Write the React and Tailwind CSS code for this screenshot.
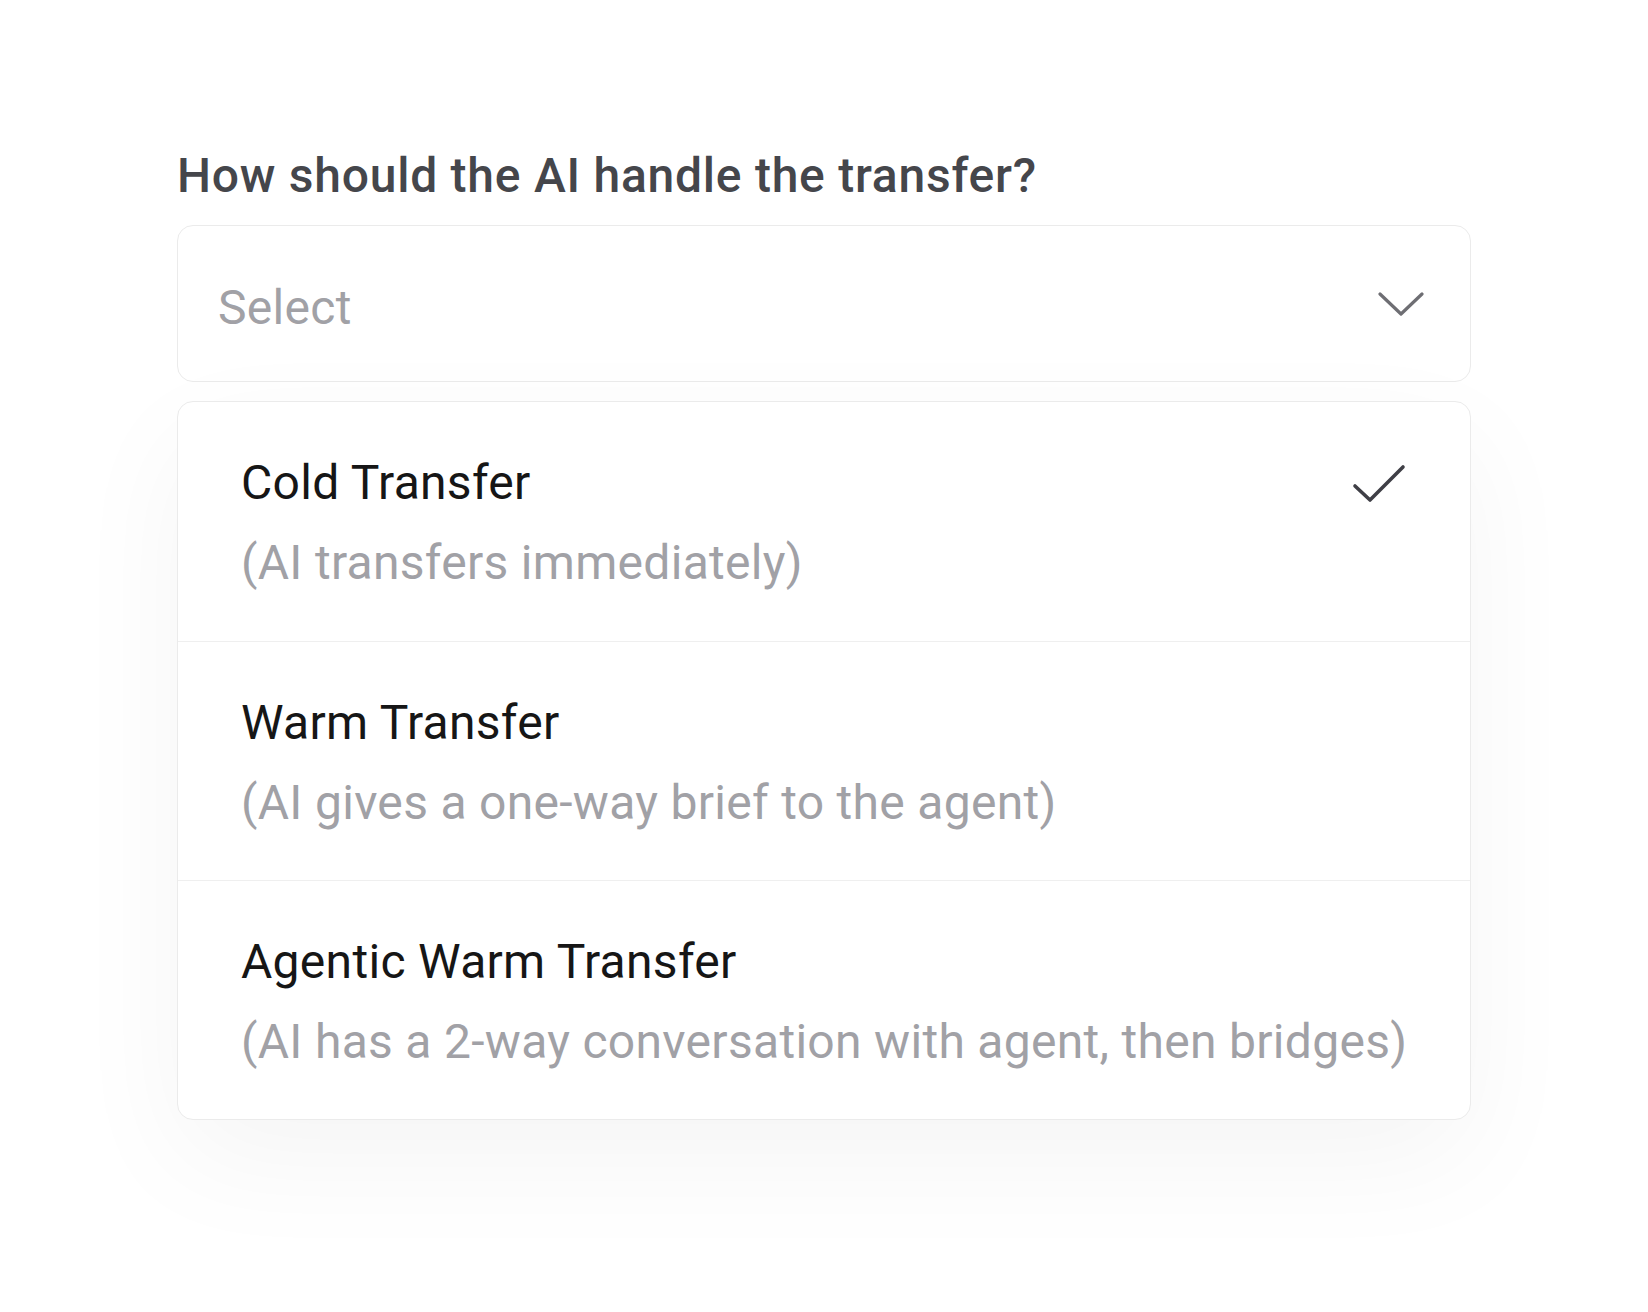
const options = [
  { title: 'Cold Transfer', note: '(AI transfers immediately)', selected: true },
  { title: 'Warm Transfer', note: '(AI gives a one-way brief to the agent)' },
  { title: 'Agentic Warm Transfer', note: '(AI has a 2-way conversation with agent, then bridges)' },
]

export default function App() {
  return (
    <div
      className="min-h-[1312px] w-full bg-white px-[177px] pt-[146px]"
      style={{ fontFamily: 'Roboto, "Noto Sans", sans-serif' }}
    >
      <h2 className="text-[48px] font-medium leading-[60px] tracking-[0.75px] text-[#45464b]">
        How should the AI handle the transfer?
      </h2>

      <div className="mt-[19px] flex h-[157px] w-[1294px] items-center justify-between rounded-2xl border border-[#ebebeb] bg-white pl-[40px] pr-[46px]">
        <span className="mt-[8px] text-[48px] leading-[60px] tracking-[0.3px] text-[#a1a1a6]">Select</span>
        <svg width="46" height="26" viewBox="0 0 46 26" fill="none" className="text-[#6e6e73]">
          <path d="M2 3l21 20L44 3" stroke="currentColor" strokeWidth="3.2" strokeLinecap="round" strokeLinejoin="round" />
        </svg>
      </div>

      <ul className="mt-[19px] w-[1294px] overflow-hidden rounded-2xl border border-[#ebebeb] bg-white shadow-[0_40px_120px_rgba(0,0,0,0.045)]">
        {options.map((opt, i) => (
          <li
            key={opt.title}
            className={`flex h-[239px] items-start justify-between pl-[63px] pr-[64px] pt-[53px] ${
              i > 0 ? 'border-t border-[#efefef]' : ''
            }`}
          >
            <div className="whitespace-nowrap tracking-[0.3px]">
              <p className="text-[48px] leading-[56px] text-[#161616]">{opt.title}</p>
              <p className="mt-[24px] text-[48px] leading-[56px] text-[#a1a1a6]">{opt.note}</p>
            </div>
            {opt.selected && (
              <svg width="54" height="40" viewBox="0 0 54 40" fill="none" className="mt-[9px] shrink-0 text-[#3f3f46]">
                <path d="M3 22l15 14L51 3" stroke="currentColor" strokeWidth="3.6" strokeLinecap="round" strokeLinejoin="round" />
              </svg>
            )}
          </li>
        ))}
      </ul>
    </div>
  )
}
